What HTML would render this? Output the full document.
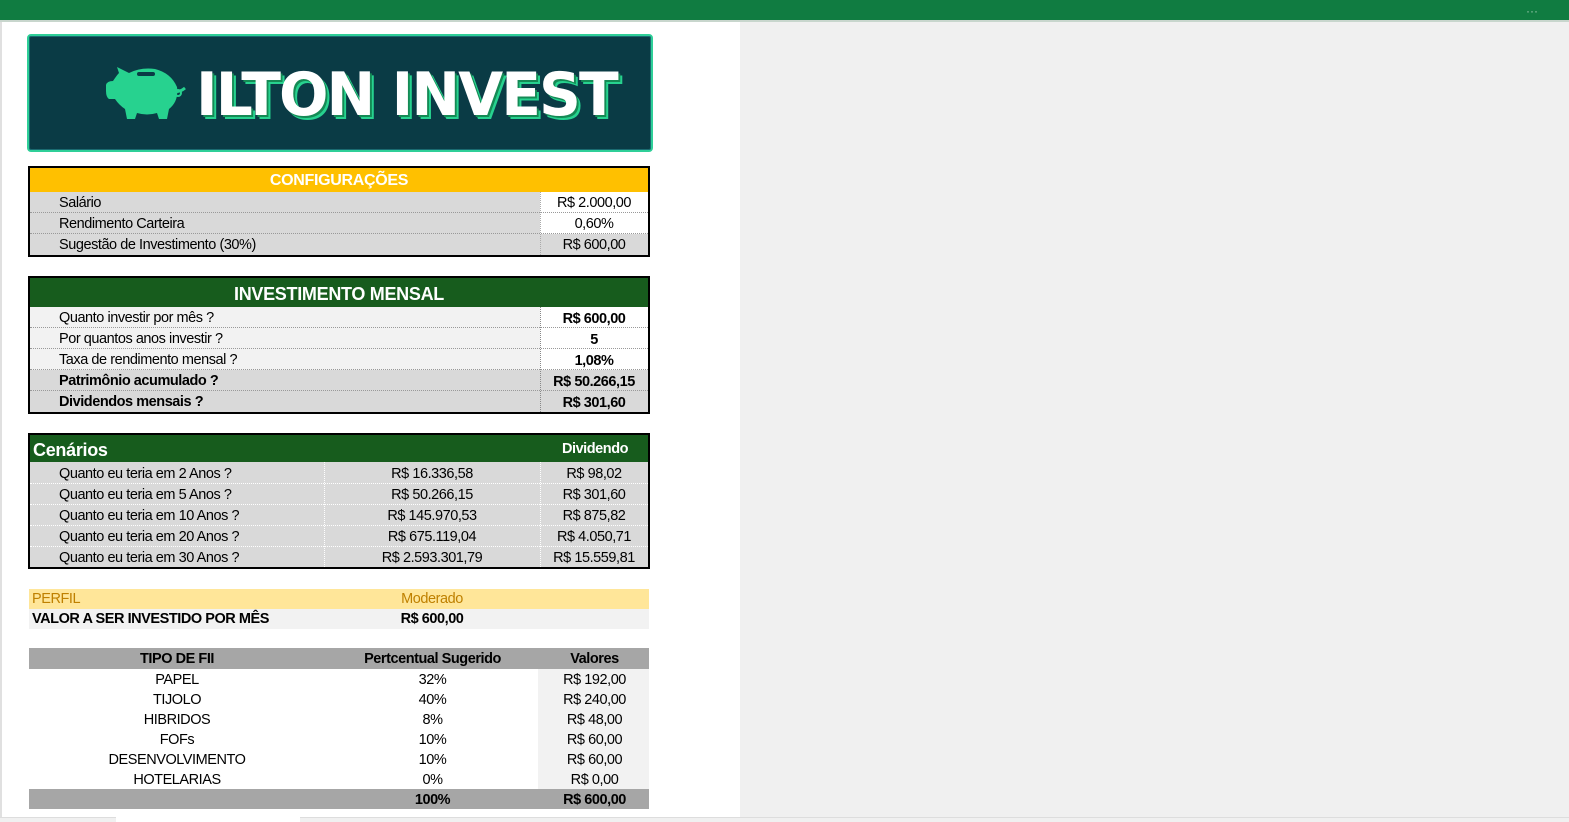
<!DOCTYPE html><html><head><meta charset="utf-8"><style>
*{margin:0;padding:0;box-sizing:border-box}
body{width:1569px;height:822px;overflow:hidden;background:#f0f0f0;font-family:"Liberation Sans",sans-serif;position:relative;color:#000}
.a{position:absolute}
.t{font-size:14.5px;letter-spacing:-0.45px;white-space:nowrap;line-height:23px}
.c{text-align:center}
.b{font-weight:bold}
.dl{border-bottom:1px dotted #999}
</style></head><body>
<div class="a" style="left:0;top:0;width:1569px;height:20px;background:#107c41"></div>
<div class="a" style="left:1526px;top:4px;color:#9cc9ae;font-size:12px">···</div>
<div class="a" style="left:0;top:20px;width:1569px;height:2px;background:#c8d6cd"></div>
<div class="a" style="left:0;top:22px;width:740px;height:795px;background:#fff;border-left:2px solid #e0e0e0"></div>
<div class="a" style="left:0;top:817px;width:1569px;height:5px;background:#f0f0f0;border-top:1px solid #ddd"></div>
<div class="a" style="left:116px;top:817px;width:184px;height:5px;background:#fff"></div>

<!-- logo -->
<div class="a" style="left:27px;top:34px;width:626px;height:118px;background:#0a3b45;border:2px solid #2fcf98;border-radius:4px;box-shadow:inset 0 0 0 1px #1a6a70"></div>
<svg class="a" style="left:105px;top:63px" width="84" height="60" viewBox="0 0 84 60">
<path fill="#27d28f" d="M12 4 L24 10 Q36 4 50 6 Q66 10 72 24 Q74 38 64 46 L62 56 L54 56 L52 50 Q42 53 32 50 L30 56 L22 56 L20 46 Q14 42 10 36 L4 36 Q1 34 1 28 L1 22 Q2 18 8 18 Q12 12 14 10 Z"/>
<rect x="32" y="9" width="18" height="4" rx="2" fill="#0a3b45"/>
<path d="M68 28 Q74 30 80 25" stroke="#27d28f" stroke-width="3" fill="none"/>
<circle cx="73" cy="30" r="3" stroke="#27d28f" stroke-width="2" fill="none"/>
</svg>
<div class="a" style="left:196px;top:62px;font-family:'DejaVu Sans',sans-serif;font-weight:bold;font-size:60px;line-height:66px;color:#fff;letter-spacing:-2px;transform:scaleX(0.97);transform-origin:left;text-shadow:2px 2px 0 #158a55,4px 4px 0 #27d28f;white-space:nowrap">ILTON INVEST</div>

<!-- config -->
<div class="a" style="left:28px;top:166px;width:622px;height:91px;border:2px solid #000;background:#d9d9d9">
 <div style="height:24px;background:#ffc000;color:#fff;font-weight:bold;font-size:16px;line-height:26px;text-align:center;letter-spacing:-0.3px">CONFIGURAÇÕES</div>
</div>
<div class="a" style="left:540px;top:192px;width:108px;height:42px;background:#fff"></div>
<div class="a t dl" style="left:30px;top:192px;width:618px;height:21px;padding-left:29px">Salário</div>
<div class="a t dl" style="left:30px;top:213px;width:618px;height:21px;padding-left:29px">Rendimento Carteira</div>
<div class="a t" style="left:30px;top:234px;width:618px;height:21px;padding-left:29px">Sugestão de Investimento (30%)</div>
<div class="a t c" style="left:540px;top:192px;width:108px">R$ 2.000,00</div>
<div class="a t c" style="left:540px;top:213px;width:108px">0,60%</div>
<div class="a t c" style="left:540px;top:234px;width:108px">R$ 600,00</div>
<div class="a" style="left:540px;top:192px;height:63px;border-left:1px dotted #aaa"></div>

<!-- investimento -->
<div class="a" style="left:28px;top:276px;width:622px;height:138px;border:2px solid #000;background:#f2f2f2">
 <div style="height:29px;background:#175c1d;color:#fff;font-weight:bold;font-size:18px;line-height:32px;text-align:center;letter-spacing:-0.3px">INVESTIMENTO MENSAL</div>
</div>
<div class="a" style="left:540px;top:307px;width:108px;height:63px;background:#fff"></div>
<div class="a" style="left:30px;top:370px;width:618px;height:42px;background:#d9d9d9"></div>
<div class="a t dl" style="left:30px;top:307px;width:618px;height:21px;padding-left:29px">Quanto investir por mês ?</div>
<div class="a t dl" style="left:30px;top:328px;width:618px;height:21px;padding-left:29px">Por quantos anos investir ?</div>
<div class="a t dl" style="left:30px;top:349px;width:618px;height:21px;padding-left:29px">Taxa de rendimento mensal ?</div>
<div class="a t b dl" style="left:30px;top:370px;width:618px;height:21px;padding-left:29px">Patrimônio acumulado ?</div>
<div class="a t b" style="left:30px;top:391px;width:618px;height:21px;padding-left:29px">Dividendos mensais ?</div>
<div class="a t c b" style="left:540px;top:308px;width:108px">R$ 600,00</div>
<div class="a t c b" style="left:540px;top:329px;width:108px">5</div>
<div class="a t c b" style="left:540px;top:350px;width:108px">1,08%</div>
<div class="a t c b" style="left:540px;top:371px;width:108px">R$ 50.266,15</div>
<div class="a t c b" style="left:540px;top:392px;width:108px">R$ 301,60</div>
<div class="a" style="left:540px;top:307px;height:105px;border-left:1px dotted #888"></div>

<!-- cenarios -->
<div class="a" style="left:28px;top:433px;width:622px;height:136px;border:2px solid #000;background:#d9d9d9">
 <div style="height:27px;background:#175c1d;color:#fff"></div>
</div>
<div class="a b" style="left:33px;top:438px;color:#fff;font-size:18px;line-height:24px;letter-spacing:-0.3px">Cenários</div>
<div class="a t c b" style="left:540px;top:438px;width:110px;color:#fff">Dividendo</div>
<div class="a" style="left:324px;top:462px;height:105px;border-left:1px dotted #fff"></div>
<div class="a" style="left:540px;top:462px;height:105px;border-left:1px dotted #fff"></div>
<div class="a t dl" style="left:30px;top:463px;width:618px;height:21px;padding-left:29px;border-color:#fff">Quanto eu teria em 2 Anos ?</div>
<div class="a t dl" style="left:30px;top:484px;width:618px;height:21px;padding-left:29px;border-color:#fff">Quanto eu teria em 5 Anos ?</div>
<div class="a t dl" style="left:30px;top:505px;width:618px;height:21px;padding-left:29px;border-color:#fff">Quanto eu teria em 10 Anos ?</div>
<div class="a t dl" style="left:30px;top:526px;width:618px;height:21px;padding-left:29px;border-color:#fff">Quanto eu teria em 20 Anos ?</div>
<div class="a t" style="left:30px;top:547px;width:618px;height:21px;padding-left:29px">Quanto eu teria em 30 Anos ?</div>
<div class="a t c" style="left:324px;top:463px;width:216px">R$ 16.336,58</div>
<div class="a t c" style="left:324px;top:484px;width:216px">R$ 50.266,15</div>
<div class="a t c" style="left:324px;top:505px;width:216px">R$ 145.970,53</div>
<div class="a t c" style="left:324px;top:526px;width:216px">R$ 675.119,04</div>
<div class="a t c" style="left:324px;top:547px;width:216px">R$ 2.593.301,79</div>
<div class="a t c" style="left:540px;top:463px;width:108px">R$ 98,02</div>
<div class="a t c" style="left:540px;top:484px;width:108px">R$ 301,60</div>
<div class="a t c" style="left:540px;top:505px;width:108px">R$ 875,82</div>
<div class="a t c" style="left:540px;top:526px;width:108px">R$ 4.050,71</div>
<div class="a t c" style="left:540px;top:547px;width:108px">R$ 15.559,81</div>

<!-- perfil -->
<div class="a" style="left:29px;top:589px;width:620px;height:20px;background:#ffe699"></div>
<div class="a" style="left:29px;top:609px;width:620px;height:20px;background:#f2f2f2"></div>
<div class="a t" style="left:32px;top:589px;color:#bf8000;line-height:21px">PERFIL</div>
<div class="a t c" style="left:324px;top:589px;width:216px;color:#bf8000;line-height:21px">Moderado</div>
<div class="a t b" style="left:32px;top:609px;line-height:21px">VALOR A SER INVESTIDO POR MÊS</div>
<div class="a t c b" style="left:324px;top:609px;width:216px;line-height:21px">R$ 600,00</div>

<!-- FII -->
<div class="a" style="left:29px;top:648px;width:620px;height:21px;background:#a6a6a6"></div>
<div class="a" style="left:538px;top:669px;width:111px;height:120px;background:#f2f2f2"></div>
<div class="a" style="left:29px;top:789px;width:620px;height:20px;background:#a6a6a6"></div>
<div class="a t c b" style="left:29px;top:649px;width:296px;line-height:21px">TIPO DE FII</div>
<div class="a t c b" style="left:325px;top:649px;width:215px;line-height:21px">Pertcentual Sugerido</div>
<div class="a t c b" style="left:540px;top:649px;width:109px;line-height:21px">Valores</div>
<div class="a t c" style="left:29px;top:670px;width:296px;line-height:20px">PAPEL<br>TIJOLO<br>HIBRIDOS<br>FOFs<br>DESENVOLVIMENTO<br>HOTELARIAS</div>
<div class="a t c" style="left:325px;top:670px;width:215px;line-height:20px">32%<br>40%<br>8%<br>10%<br>10%<br>0%</div>
<div class="a t c" style="left:540px;top:670px;width:109px;line-height:20px">R$ 192,00<br>R$ 240,00<br>R$ 48,00<br>R$ 60,00<br>R$ 60,00<br>R$ 0,00</div>
<div class="a t c b" style="left:325px;top:790px;width:215px;line-height:20px">100%</div>
<div class="a t c b" style="left:540px;top:790px;width:109px;line-height:20px">R$ 600,00</div>
</body></html>
